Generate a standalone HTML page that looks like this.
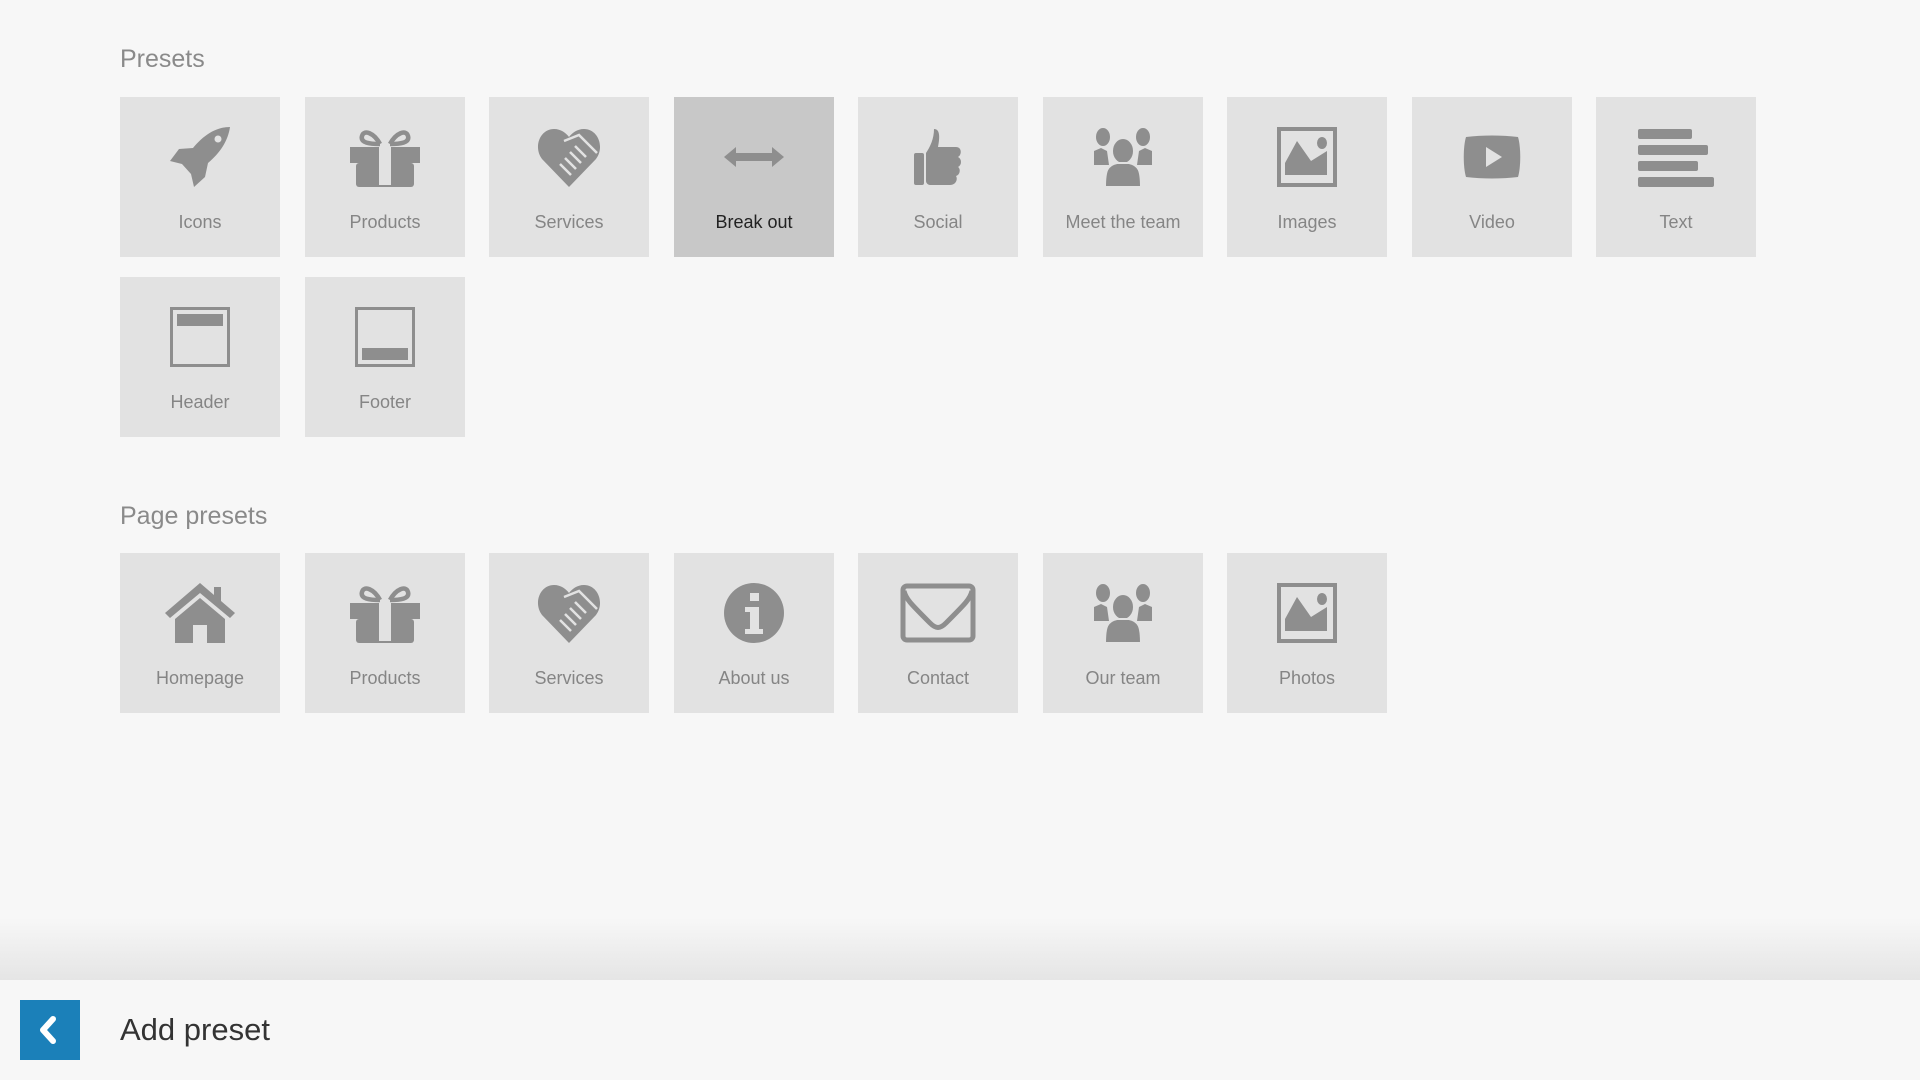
<!DOCTYPE html>
<html><head><meta charset="utf-8"><style>
*{margin:0;padding:0;box-sizing:border-box}
body{width:1920px;height:1080px;background:#f7f7f7;font-family:"Liberation Sans",sans-serif;position:relative;overflow:hidden}
h2{position:absolute;left:120px;font-weight:normal;font-size:25px;color:#8a8a8a}
.t{position:absolute;width:160px;height:160px;background:#e2e2e2}
.t svg{position:absolute;left:50px;top:30px;width:60px;height:60px}
.t span{position:absolute;left:0;right:0;top:115px;text-align:center;font-size:18px;color:#858585}
.t.d{background:#c8c8c8}.t.d span{color:#222}
.grad{position:absolute;left:0;top:918px;width:1920px;height:62px;background:linear-gradient(#f7f7f7,#e5e5e5)}
.bar{position:absolute;left:0;top:980px;width:1920px;height:100px;background:#f7f7f7}
.btn{position:absolute;left:20px;top:1000px;width:60px;height:60px;background:#1b80b9}
.ttl{position:absolute;left:120px;top:1012px;font-size:31px;color:#333}
</style></head><body>
<svg width="0" height="0" style="position:absolute"><defs>
<g id="rocket" fill="#8e8e8e"><path d="M60 0 C45 0 33 9 23 21 L9 22 L0 34 L12 37 L21 47 L24 60 L35 50 L38 36 C50 26 58 14 60 0Z"/><circle cx="48" cy="12" r="3.5" fill="#e2e2e2"/></g>
<g id="gift" fill="#8e8e8e"><path d="M30 17 C24 6 14 2 12 9 C10 16 20 17 30 17 M40 17 C46 6 56 2 58 9 C60 16 50 17 40 17" stroke="#8e8e8e" stroke-width="4.5" fill="none"/><rect x="0" y="20" width="70" height="16"/><rect x="6" y="36" width="58" height="24" rx="3"/><rect x="29" y="20" width="12" height="40" fill="#e2e2e2"/><rect x="29" y="58" width="12" height="2" fill="#8e8e8e"/></g>
<g id="heart" fill="#8e8e8e"><path d="M32 60 L5 32 C-4 20 3 2 17 2 C24 2 29 6 32 10 C35 6 40 2 47 2 C61 2 68 20 59 32Z"/><path d="M27 14 L42 8 L60 26 M38 19 L49 30 M33 25 L44 36 M28 31 L39 42 M23 37 L34 48" stroke="#e2e2e2" stroke-width="2.5" fill="none"/></g>
<g id="arrow" fill="#8e8e8e"><path d="M0 30 L12 20 L12 26 L48 26 L48 20 L60 30 L48 40 L48 34 L12 34 L12 40Z"/></g>
<g id="thumb" fill="#8e8e8e"><path d="M26 2 C32 2 32 10 30 20 L48 20 C54 20 54 28 50 30 C54 32 54 38 50 40 C53 42 52 48 48 49 C50 52 48 58 42 58 L22 58 C20 58 18 56 18 54 L18 26 C22 20 26 12 26 2Z"/><rect x="6" y="26" width="10" height="32" rx="2"/></g>
<g id="team" fill="#8e8e8e"><ellipse cx="10" cy="10" rx="7" ry="9"/><ellipse cx="50" cy="10" rx="7" ry="9"/><path d="M1 24 L8 21 L14 24 L16 38 L1 38Z M59 24 L52 21 L46 24 L44 38 L59 38Z"/><ellipse cx="30" cy="24" rx="11" ry="13" stroke="#e2e2e2" stroke-width="2"/><path d="M12 60 C12 44 14 38 24 36 L36 36 C46 38 48 44 48 60Z" stroke="#e2e2e2" stroke-width="2"/></g>
<g id="img" fill="#8e8e8e"><path d="M0 0 H60 V60 H0Z M4 4 V56 H56 V4Z" fill-rule="evenodd"/><path d="M8 48 L8 36 L20 14 L34 34 L50 24 L50 48Z"/><ellipse cx="45" cy="16" rx="5" ry="6"/></g>
<g id="video" fill="#8e8e8e"><path d="M4 10 C20 8 40 8 56 10 C59 20 59 40 56 50 C40 52 20 52 4 50 C1 40 1 20 4 10Z"/><path d="M24 20 L40 30 L24 40Z" fill="#e2e2e2"/></g>
<g id="text" fill="#8e8e8e"><rect x="0" y="2" width="54" height="10" rx="2"/><rect x="0" y="18" width="70" height="10" rx="2"/><rect x="0" y="34" width="60" height="10" rx="2"/><rect x="0" y="50" width="76" height="10" rx="2"/></g>
<g id="header" fill="#8e8e8e"><path d="M0 0 H60 V60 H0Z M3 3 V57 H57 V3Z" fill-rule="evenodd"/><rect x="7" y="7" width="46" height="12"/></g>
<g id="footer" fill="#8e8e8e"><path d="M0 0 H60 V60 H0Z M3 3 V57 H57 V3Z" fill-rule="evenodd"/><rect x="7" y="41" width="46" height="12"/></g>
<g id="home" fill="#8e8e8e"><path d="M35 0 L0 30 L5 35 L35 10 L65 35 L70 30 L56 18 L56 4 L49 4 L49 12Z"/><path d="M10 36 L35 15 L60 36 L60 60 L42 60 L42 42 L28 42 L28 60 L10 60Z"/></g>
<g id="info" fill="#8e8e8e"><ellipse cx="30" cy="30" rx="30" ry="30"/><rect x="26" y="10" width="9" height="8" fill="#e2e2e2"/><path d="M21 24 H35 V46 H39 V51 H21 V46 H26 V29 H21Z" fill="#e2e2e2"/></g>
<g id="mail" fill="none" stroke="#8e8e8e" stroke-width="5"><rect x="3" y="3" width="70" height="54" rx="4"/><path d="M4 8 C6 16 10 20 30 40 C36 46 40 46 46 40 C66 20 70 16 72 8"/></g>
</defs></svg>

<h2 style="top:45px">Presets</h2>
<div class="t" style="left:120px;top:97px"><svg viewBox="0 0 60 60"><use href="#rocket"/></svg><span>Icons</span></div>
<div class="t" style="left:305px;top:97px"><svg viewBox="0 0 70 60" style="left:45px;width:70px"><use href="#gift"/></svg><span>Products</span></div>
<div class="t" style="left:489px;top:97px"><svg viewBox="0 0 64 62" style="left:47px;width:66px;height:62px"><use href="#heart"/></svg><span>Services</span></div>
<div class="t d" style="left:674px;top:97px"><svg viewBox="0 0 60 60"><use href="#arrow"/></svg><span>Break out</span></div>
<div class="t" style="left:858px;top:97px"><svg viewBox="0 0 60 60"><use href="#thumb"/></svg><span>Social</span></div>
<div class="t" style="left:1043px;top:97px"><svg viewBox="0 0 60 60"><use href="#team"/></svg><span>Meet the team</span></div>
<div class="t" style="left:1227px;top:97px"><svg viewBox="0 0 60 60"><use href="#img"/></svg><span>Images</span></div>
<div class="t" style="left:1412px;top:97px"><svg viewBox="0 0 60 60"><use href="#video"/></svg><span>Video</span></div>
<div class="t" style="left:1596px;top:97px"><svg viewBox="0 0 76 60" style="left:42px;width:76px"><use href="#text"/></svg><span>Text</span></div>
<div class="t" style="left:120px;top:277px"><svg viewBox="0 0 60 60"><use href="#header"/></svg><span>Header</span></div>
<div class="t" style="left:305px;top:277px"><svg viewBox="0 0 60 60"><use href="#footer"/></svg><span>Footer</span></div>

<h2 style="top:502px">Page presets</h2>
<div class="t" style="left:120px;top:553px"><svg viewBox="0 0 70 60" style="left:45px;width:70px"><use href="#home"/></svg><span>Homepage</span></div>
<div class="t" style="left:305px;top:553px"><svg viewBox="0 0 70 60" style="left:45px;width:70px"><use href="#gift"/></svg><span>Products</span></div>
<div class="t" style="left:489px;top:553px"><svg viewBox="0 0 64 62" style="left:47px;width:66px;height:62px"><use href="#heart"/></svg><span>Services</span></div>
<div class="t" style="left:674px;top:553px"><svg viewBox="0 0 60 60"><use href="#info"/></svg><span>About us</span></div>
<div class="t" style="left:858px;top:553px"><svg viewBox="0 0 76 60" style="left:42px;width:76px"><use href="#mail"/></svg><span>Contact</span></div>
<div class="t" style="left:1043px;top:553px"><svg viewBox="0 0 60 60"><use href="#team"/></svg><span>Our team</span></div>
<div class="t" style="left:1227px;top:553px"><svg viewBox="0 0 60 60"><use href="#img"/></svg><span>Photos</span></div>

<div class="grad"></div>
<div class="bar"></div>
<div class="btn"><svg width="60" height="60" viewBox="0 0 60 60"><path d="M33 19 L23 30 L33 41" stroke="#fff" stroke-width="6" fill="none" stroke-linecap="round" stroke-linejoin="round"/></svg></div>
<div class="ttl">Add preset</div>
</body></html>
